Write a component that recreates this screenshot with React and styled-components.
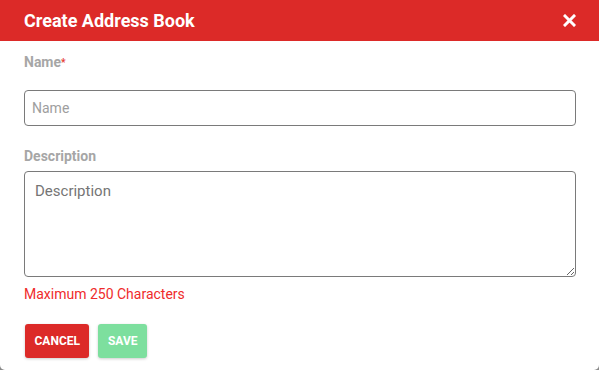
import React, {useState} from 'react';
import styled, {createGlobalStyle} from 'styled-components';

const GlobalStyle = createGlobalStyle`
  html, body {
    margin: 0;
    padding: 0;
    background: #8a8a8a;
    font-family: Roboto, "Liberation Sans", sans-serif;
  }
`;

const Dialog = styled.div`
  width: 599px;
  height: 370px;
  background: #fff;
  border-radius: 0 0 5px 5px;
  overflow: hidden;
  display: flex;
  flex-direction: column;
`;

const Header = styled.div`
  height: 41px;
  background: #dc2a28;
  display: flex;
  align-items: center;
  justify-content: space-between;
  padding: 0 23px 0 24px;
  box-sizing: border-box;
`;

const Title = styled.h2`
  margin: 0;
  color: #fff;
  font-size: 18px;
  font-weight: 700;
`;

const Close = styled.button`
  border: none;
  background: none;
  padding: 0;
  width: 13px;
  height: 13px;
  cursor: pointer;
  display: flex;
`;

const Body = styled.form`
  padding: 13px 23px 0 24px;
  display: flex;
  flex-direction: column;
`;

const Label = styled.label`
  font-size: 14px;
  font-weight: 700;
  color: #a6a6a6;
  line-height: 16px;
  height: 16px;
  margin-bottom: ${p => p.gap}px;

  span {
    color: #e53935;
    font-size: 10px;
    line-height: 0;
    vertical-align: 1px;
  }
`;

const Input = styled.input`
  box-sizing: border-box;
  height: 36px;
  border: 1px solid #7a7a7a;
  border-radius: 4px;
  padding: 0 7px;
  font-family: inherit;
  font-size: 14px;
  color: #333;
  margin-bottom: 22px;

  &::placeholder {
    color: #9e9e9e;
  }
`;

const Area = styled.textarea`
  box-sizing: border-box;
  height: 106px;
  border: 1px solid #7a7a7a;
  border-radius: 4px;
  padding: 10px 10px;
  font-family: inherit;
  font-size: 15px;
  color: #333;
  resize: vertical;
  margin: 0;

  &::placeholder {
    color: #757575;
  }
`;

const Hint = styled.div`
  color: #ef2b2b;
  font-size: 14px;
  margin-top: 8px;
  line-height: 18px;
`;

const Actions = styled.div`
  display: flex;
  gap: 9px;
  margin-top: 21px;
  padding-left: 1px;
`;

const Button = styled.button`
  height: 34px;
  padding: 0 9.5px;
  border: none;
  border-radius: 3px;
  background: ${p => p.bg};
  color: #fff;
  font-family: inherit;
  font-size: 12px;
  font-weight: 700;
  text-transform: uppercase;
  box-shadow: 0 1px 3px rgba(0,0,0,0.2);
  cursor: pointer;
`;

const App = () => {
  const [name, setName] = useState('');
  const [description, setDescription] = useState('');

  return (
    <Dialog>
      <GlobalStyle />
      <Header>
        <Title>Create Address Book</Title>
        <Close aria-label="close">
          <svg width="13" height="13" viewBox="0 0 13 13">
            <path d="M2 2 L11 11 M11 2 L2 11" stroke="#fff" strokeWidth="3" strokeLinecap="square" />
          </svg>
        </Close>
      </Header>
      <Body onSubmit={e => e.preventDefault()}>
        <Label gap={20}>Name<span>*</span></Label>
        <Input placeholder="Name" value={name} onChange={e => setName(e.target.value)} />
        <Label gap={7}>Description</Label>
        <Area placeholder="Description" value={description} onChange={e => setDescription(e.target.value)} />
        <Hint>Maximum 250 Characters</Hint>
        <Actions>
          <Button type="button" bg="#dc2a28">Cancel</Button>
          <Button type="submit" bg="#7ddf9e">Save</Button>
        </Actions>
      </Body>
    </Dialog>
  );
};

export default App;
